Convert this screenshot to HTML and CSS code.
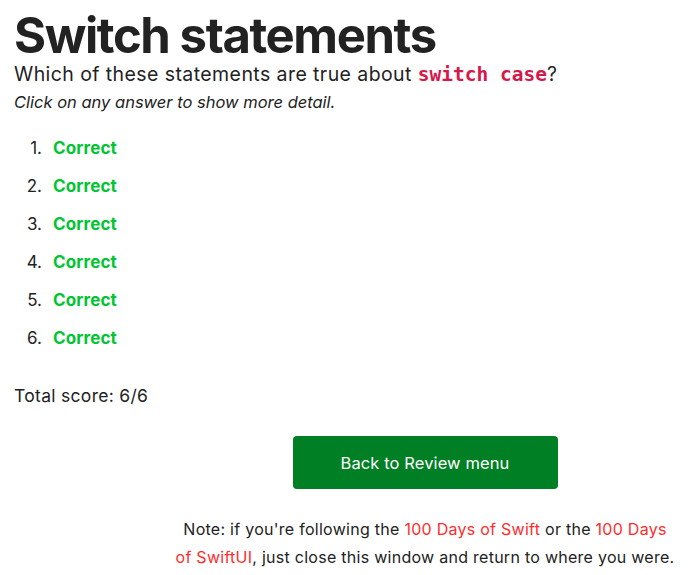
FILE: index.html
```html
<!DOCTYPE html>
<html>
<head>
<meta charset="utf-8">
<link rel="stylesheet" href="styles.css">
</head>
<body>
<main class="page">
  <h1 class="title">Switch statements</h1>
  <p class="question">Which of these statements are true about <code class="code">switch case</code>?</p>
  <p class="hint">Click on any answer to show more detail.</p>
  <ol class="answers">
    <li class="answer"><span class="correct">Correct</span></li>
    <li class="answer"><span class="correct">Correct</span></li>
    <li class="answer"><span class="correct">Correct</span></li>
    <li class="answer"><span class="correct">Correct</span></li>
    <li class="answer"><span class="correct">Correct</span></li>
    <li class="answer"><span class="correct">Correct</span></li>
  </ol>
  <p class="score">Total score: 6/6</p>
  <div class="footer">
    <a class="button" href="#">Back to Review menu</a>
    <p class="note">Note: if you're following the <a class="link" href="#">100 Days of Swift</a> or the <a class="link" href="#">100 Days of SwiftUI</a>, just close this window and return to where you were.</p>
  </div>
</main>
</body>
</html>
```
FILE: styles.css
```css
html, body {
  margin: 0;
  padding: 0;
  background: #fff;
}
body {
  font-family: Inter, "Noto Sans", sans-serif;
  color: #222222;
}
.page {
  padding: 0 14px;
}
.title {
  font-size: 49px;
  font-weight: 700;
  line-height: 52px;
  margin: 10px 0 0;
  letter-spacing: -1.4px;
}
.question {
  font-size: 19.5px;
  line-height: 27px;
  margin: -1px 0 0;
  letter-spacing: 0.42px;
}
.code {
  font-family: "DejaVu Sans Mono", monospace;
  color: #d6184a;
  font-weight: 700;
  font-size: 19.5px;
  letter-spacing: 0;
}
.hint {
  font-size: 16.5px;
  line-height: 27px;
  font-style: italic;
  margin: 1px 0 0;
}
.answers {
  list-style: none;
  counter-reset: item;
  margin: 20px 0 0;
  padding: 0;
  display: flex;
  flex-direction: column;
  gap: 14px;
  font-size: 17px;
}
.answer {
  counter-increment: item;
  display: flex;
  line-height: 24px;
}
.answer::before {
  content: counter(item) ".";
  width: 28px;
  margin-right: 11px;
  text-align: right;
  color: #222222;
}
.correct {
  color: #00c532;
  font-weight: 700;
  letter-spacing: 0.15px;
}
.score {
  font-size: 17.5px;
  line-height: 24px;
  letter-spacing: 0.3px;
  margin: 34px 0 0;
}
.footer {
  margin-left: 161px;
  width: 500px;
  display: flex;
  flex-direction: column;
  align-items: center;
}
.button {
  margin-top: 28px;
  width: 265px;
  height: 53px;
  background: #007f24;
  color: #fff;
  border-radius: 4px;
  display: flex;
  align-items: center;
  justify-content: center;
  font-size: 16.5px;
  letter-spacing: 0.1px;
  text-decoration: none;
}
.note {
  text-align: center;
  font-size: 16px;
  line-height: 28px;
  letter-spacing: 0.27px;
  margin: 26px 0 0;
}
.link {
  color: #ff2d2d;
  text-decoration: none;
}
```
